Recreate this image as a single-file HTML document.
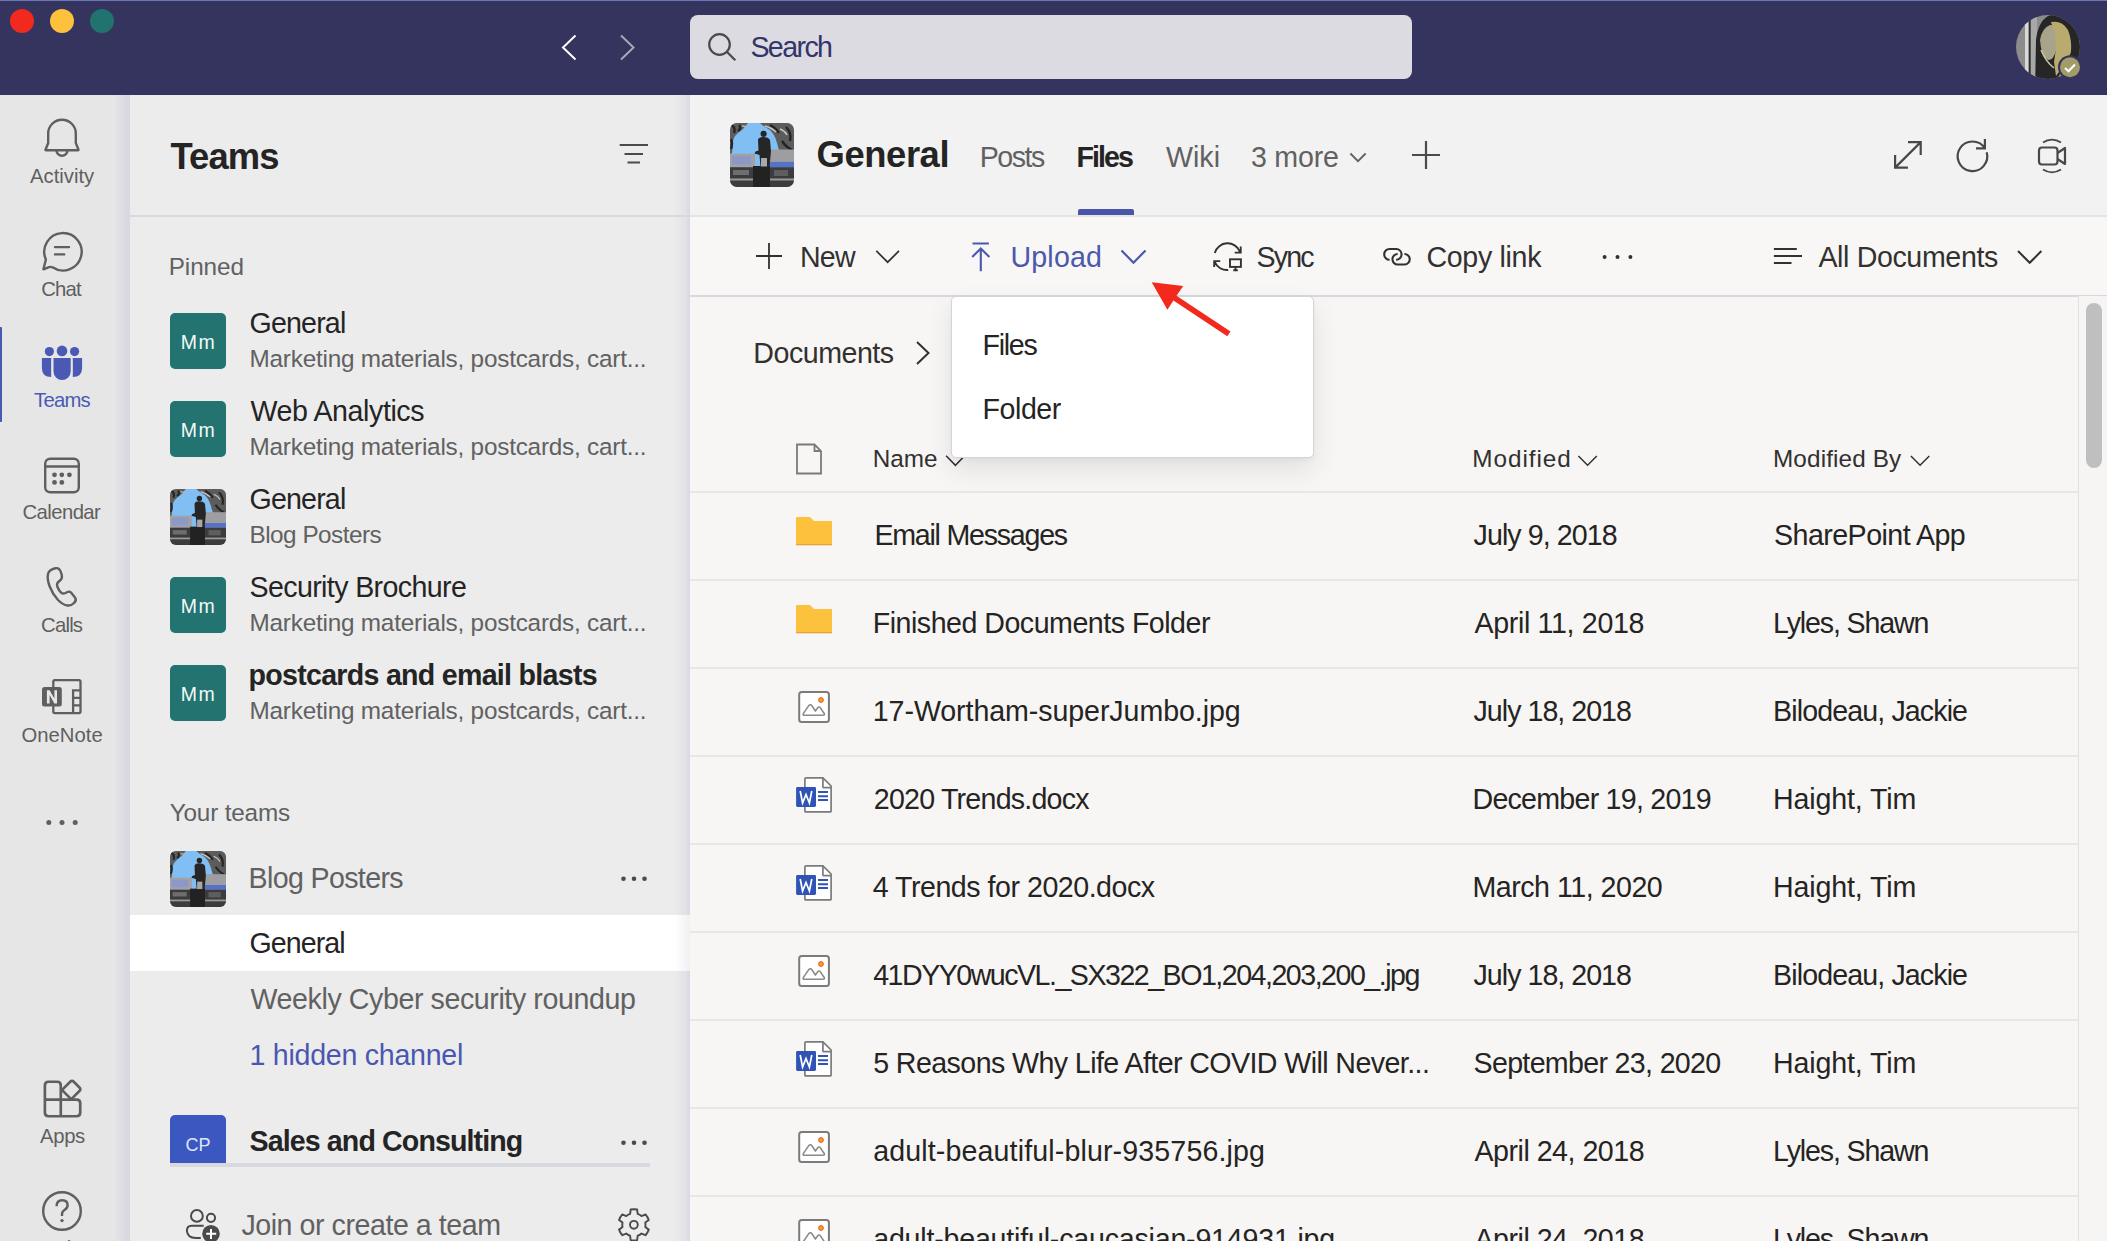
<!DOCTYPE html>
<html><head><meta charset="utf-8"><title>Teams</title>
<style>
html,body{margin:0;padding:0;}
body{width:2107px;height:1241px;overflow:hidden;position:relative;background:#f7f6f4;font-family:"Liberation Sans",sans-serif;}
.t{position:absolute;white-space:nowrap;line-height:1;}
.r{position:absolute;display:block;}
</style></head><body>
<div class="r" style="left:0px;top:0px;width:2107px;height:95px;background:#34345e;"></div>
<div class="r" style="left:0px;top:0px;width:2107px;height:1px;background:#6e78b8;"></div>
<div class="r" style="left:0px;top:95px;width:130px;height:1146px;background:#e6e6e6;"></div>
<div class="r" style="left:114px;top:95px;width:12px;height:1146px;background:linear-gradient(90deg,rgba(216,215,226,0),rgba(216,215,226,0.85))"></div>
<div class="r" style="left:126px;top:95px;width:4px;height:1146px;background:#d9d8e1;"></div>
<div class="r" style="left:130px;top:95px;width:560px;height:1146px;background:#ececec;"></div>
<div class="r" style="left:674px;top:95px;width:13px;height:1146px;background:linear-gradient(90deg,rgba(216,215,226,0),rgba(216,215,226,0.55))"></div>
<div class="r" style="left:687px;top:95px;width:3px;height:1146px;background:#dcdbe3;"></div>
<div class="r" style="left:690px;top:95px;width:1417px;height:121px;background:#f2f2f2;"></div>
<div class="r" style="left:690px;top:217px;width:1417px;height:78px;background:#f8f7f6;"></div>
<div class="r" style="left:690px;top:296px;width:1417px;height:945px;background:#f7f6f4;"></div>
<div class="r" style="left:130px;top:215px;width:560px;height:2px;background:#d8d8e0;"></div>
<div class="r" style="left:690px;top:215px;width:1417px;height:2px;background:#e4e4e4;"></div>
<div class="r" style="left:690px;top:295px;width:1417px;height:2px;background:#d9d8de;"></div>
<svg class="r" style="left:0px;top:0px;" width="130" height="45" viewBox="0 0 130 45"><circle cx="22" cy="21" r="12" fill="#f2291e"/><circle cx="62" cy="21" r="12" fill="#fdc13e"/><circle cx="102" cy="21" r="12" fill="#217370"/></svg>
<svg class="r" style="left:550px;top:25px;" width="100" height="45" viewBox="0 0 100 45"><path d="M25.5 10.5 L13 22.5 L25.5 34.5" fill="none" stroke="#ffffff" stroke-width="2"/><path d="M71 10.5 L83.5 22.5 L71 34.5" fill="none" stroke="#a8a8b4" stroke-width="2"/></svg>
<div class="r" style="left:690px;top:15px;width:722px;height:64px;background:#dcdbe1;border-radius:8px;"></div>
<svg class="r" style="left:700px;top:25px;" width="50" height="45" viewBox="0 0 50 45"><circle cx="19.5" cy="19.5" r="10.3" fill="none" stroke="#4a4a4a" stroke-width="2.2"/><path d="M26.8 26.8 L35.3 35.3" stroke="#4a4a4a" stroke-width="2.2" stroke-linecap="butt"/></svg>
<div class="t" style="left:750.40px;top:33.0px;font-size:28.6px;color:#33356a;letter-spacing:-1.60px;">Search</div>
<svg class="r" style="left:2010px;top:10px" width="80" height="80" viewBox="0 0 80 80">
<defs><clipPath id="av"><circle cx="38" cy="37" r="32"/></clipPath></defs>
<g clip-path="url(#av)">
<rect x="0" y="0" width="80" height="80" fill="#8c8c8c"/>
<rect x="15" y="0" width="3.2" height="80" fill="#d8d8d8"/>
<rect x="19" y="0" width="1.8" height="80" fill="#2c2c2c"/>
<rect x="20.8" y="0" width="6.2" height="80" fill="#a8a8a8"/>
<path d="M25 80 L26 30 Q28 12 38 6 Q48 2 58 8 Q68 16 70 34 L70 50 L62 56 L50 64 L40 80 Z" fill="#262626"/>
<path d="M30 30 Q32 18 40 15 Q46 14 47 22 L46 40 Q44 50 38 50 Q31 46 30 30 Z" fill="#a8a48a"/>
<path d="M41 12 Q52 10 58 20 Q62 30 61 42 L56 54 Q50 60 46 66 L44 52 Q47 36 45 24 Z" fill="#b9aa6e"/>
<path d="M31 40 Q36 52 44 58" stroke="#d0c8a0" stroke-width="1.5" fill="none"/>
</g>
<circle cx="60" cy="57.3" r="12" fill="#34345e"/>
<circle cx="60" cy="57.3" r="10" fill="#a39b68"/>
<path d="M55 58 L58.5 61.3 L65 54.5" fill="none" stroke="#fff" stroke-width="2"/>
</svg>
<div class="r" style="left:0px;top:327px;width:2px;height:95px;background:#4a5ab4;border-radius:0 1px 1px 0;"></div>
<svg class="r" style="left:32px;top:110px;" width="60" height="60" viewBox="0 0 60 60"><path d="M16.2 33 L16.2 23.5 A13.8 13.8 0 0 1 43.8 23.5 L43.8 33 L46.3 39.2 Q47 40.3 45.8 40.3 L14.2 40.3 Q13 40.3 13.7 39.2 Z" fill="none" stroke="#5f5f5f" stroke-width="2.4" stroke-linejoin="round"/><path d="M24.5 40.3 A5.5 5.5 0 0 0 35.5 40.3" fill="none" stroke="#5f5f5f" stroke-width="2.4"/></svg>
<div class="t" style="left:30.00px;top:166.0px;font-size:20.3px;color:#5f5f5f;">Activity</div>
<svg class="r" style="left:32px;top:222px;" width="60" height="60" viewBox="0 0 60 60"><path d="M13.6 36.8 A18.7 18.7 0 1 1 20.5 45.3 Q18.8 44.6 17 45.1 L11.4 47.3 L13.6 38.8 Q14 37.8 13.6 36.8 Z" fill="none" stroke="#5f5f5f" stroke-width="2.4" stroke-linejoin="round"/><path d="M23 25.1 H37 M23 32.4 H32.2" stroke="#5f5f5f" stroke-width="2.4" stroke-linecap="round"/></svg>
<div class="t" style="left:41.15px;top:278.5px;font-size:20.3px;color:#5f5f5f;letter-spacing:-0.77px;">Chat</div>
<svg class="r" style="left:32px;top:332px;" width="60" height="60" viewBox="0 0 60 60"><circle cx="17.4" cy="19.6" r="4.6" fill="#4a5ab4"/><circle cx="30" cy="18.9" r="5.3" fill="#4a5ab4"/><circle cx="42.6" cy="19.6" r="4.6" fill="#4a5ab4"/><path d="M21.5 26 H38.7 V39.3 A8.6 8.6 0 0 1 21.5 39.3 Z" fill="#4a5ab4"/><path d="M9.9 26 H19.3 Q19 29 19.2 45 Q9.9 45 9.9 36 Z" fill="#4a5ab4"/><path d="M50.1 26 H40.7 Q41 29 40.8 45 Q50.1 45 50.1 36 Z" fill="#4a5ab4"/></svg>
<div class="t" style="left:34.10px;top:390.0px;font-size:20.3px;color:#4a5ab4;letter-spacing:-0.80px;">Teams</div>
<svg class="r" style="left:40px;top:453px;" width="45" height="45" viewBox="0 0 45 45"><rect x="5.2" y="5.7" width="33.6" height="33.6" rx="5" fill="none" stroke="#5f5f5f" stroke-width="2.4"/><path d="M5.2 13.5 H38.8" stroke="#5f5f5f" stroke-width="2.4"/><circle cx="14.5" cy="21.8" r="2.4" fill="#5f5f5f"/><circle cx="21.8" cy="21.8" r="2.4" fill="#5f5f5f"/><circle cx="29.4" cy="21.8" r="2.4" fill="#5f5f5f"/><circle cx="14.5" cy="29.4" r="2.4" fill="#5f5f5f"/><circle cx="21.8" cy="29.4" r="2.4" fill="#5f5f5f"/></svg>
<div class="t" style="left:22.50px;top:502.4px;font-size:20.3px;color:#5f5f5f;letter-spacing:-0.57px;">Calendar</div>
<svg class="r" style="left:36px;top:560px;" width="50" height="52" viewBox="0 0 50 52"><path d="M12 14 Q13 9.5 19.5 8.2 Q23.5 7.5 25 12.5 L25.8 15.2 Q26.5 18.5 24 20.5 L21.8 22.5 Q20.5 24 21.5 27 Q23 31 25.5 33 Q27 34 29.5 33 L31.5 32 Q33.5 31 35 32.5 L39 37.5 Q41 40.5 38 43 Q35 46 31.5 45.5 Q27 45 22 40 Q16.5 34 13.5 26 Q11 19 12 14 Z" fill="none" stroke="#5f5f5f" stroke-width="2.4" stroke-linejoin="round"/></svg>
<div class="t" style="left:41.10px;top:614.7px;font-size:20.3px;color:#5f5f5f;letter-spacing:-0.80px;">Calls</div>
<svg class="r" style="left:40px;top:675px;" width="45" height="45" viewBox="0 0 45 45"><rect x="13.3" y="5.2" width="27.2" height="32.9" rx="1.5" fill="none" stroke="#5f5f5f" stroke-width="2.3"/><path d="M33.1 38.1 V15.3 H40.5 M33.1 22.8 H40.5 M33.1 30.4 H40.5" fill="none" stroke="#5f5f5f" stroke-width="2.3"/><rect x="2" y="12.1" width="19.8" height="19.5" rx="2.5" fill="#5f5f5f"/><path d="M6.9 28.4 V15.3 H9.6 L14.4 23.6 V15.3 H17 V28.4 H14.4 L9.6 20.1 V28.4 Z" fill="#e8e8e8"/></svg>
<div class="t" style="left:21.50px;top:725.0px;font-size:20.3px;color:#5f5f5f;">OneNote</div>
<svg class="r" style="left:40px;top:812px;" width="45" height="20" viewBox="0 0 45 20"><circle cx="8.8" cy="10.6" r="2.5" fill="#5f5f5f"/><circle cx="22" cy="10.6" r="2.5" fill="#5f5f5f"/><circle cx="35.2" cy="10.6" r="2.5" fill="#5f5f5f"/></svg>
<svg class="r" style="left:38.45px;top:1073.7px" width="50" height="50" viewBox="0 0 45 45"><path d="M6.2 22.4 V10.3 Q6.2 7 9.5 7 H17.3 Q20.5 7 20.5 10.3 V38 H9.5 Q6.2 38 6.2 34.7 Z M6.2 23 H34.7 Q38 23 38 26.3 V34.7 Q38 38 34.7 38 H20.5" fill="none" stroke="#5f5f5f" stroke-width="2.4" stroke-linejoin="round"/><path d="M22.8 13.2 L29 7 Q30.6 5.4 32.2 7 L37.3 12.1 Q38.9 13.7 37.3 15.3 L31.1 21.5 Q29.9 22.7 28.7 21.5 L22.8 15.6 Q21.6 14.4 22.8 13.2 Z" fill="none" stroke="#5f5f5f" stroke-width="2.4" stroke-linejoin="round"/></svg>
<div class="t" style="left:40.00px;top:1126.0px;font-size:20.3px;color:#5f5f5f;letter-spacing:-0.33px;">Apps</div>
<svg class="r" style="left:40px;top:1189px;" width="45" height="45" viewBox="0 0 45 45"><circle cx="22" cy="22" r="18.8" fill="none" stroke="#5f5f5f" stroke-width="2.4"/><path d="M16.6 17.2 Q16.6 11.3 22.3 11.3 Q27.6 11.3 27.6 16.3 Q27.6 19.4 24.2 21.2 Q22 22.5 22 25.6 V27" fill="none" stroke="#5f5f5f" stroke-width="2.4"/><circle cx="22" cy="31.6" r="1.7" fill="#5f5f5f"/></svg>
<div class="t" style="left:39.50px;top:1238.0px;font-size:20.3px;color:#5f5f5f;letter-spacing:0.67px;">Help</div>
<div class="t" style="left:170.40px;top:139.0px;font-size:36.4px;color:#252424;font-weight:700;letter-spacing:-0.85px;">Teams</div>
<svg class="r" style="left:615px;top:140px;" width="40" height="30" viewBox="0 0 40 30"><path d="M4.7 5 H33 M9.5 14 H28 M12.5 22.5 H25" stroke="#4a4a4a" stroke-width="2"/></svg>
<div class="t" style="left:168.70px;top:255.0px;font-size:24.3px;color:#616161;letter-spacing:-0.08px;">Pinned</div>
<div class="r" style="left:170px;top:313px;width:56px;height:56px;background:#237470;border-radius:5px;"></div>
<div class="t" style="left:180.80px;top:333.0px;font-size:19.5px;color:#f4f8f8;letter-spacing:1.40px;">Mm</div>
<div class="t" style="left:249.50px;top:309.2px;font-size:28.6px;color:#252424;letter-spacing:-0.83px;">General</div>
<div class="t" style="left:249.50px;top:347.0px;font-size:24.3px;color:#616161;letter-spacing:-0.21px;">Marketing materials, postcards, cart...</div>
<div class="r" style="left:170px;top:401px;width:56px;height:56px;background:#237470;border-radius:5px;"></div>
<div class="t" style="left:180.80px;top:421.0px;font-size:19.5px;color:#f4f8f8;letter-spacing:1.40px;">Mm</div>
<div class="t" style="left:250.50px;top:397.2px;font-size:28.6px;color:#252424;letter-spacing:-0.42px;">Web Analytics</div>
<div class="t" style="left:249.50px;top:435.0px;font-size:24.3px;color:#616161;letter-spacing:-0.21px;">Marketing materials, postcards, cart...</div>
<svg class="r" style="left:170px;top:489px" width="56" height="56" viewBox="0 0 64 64"><defs><clipPath id="ph170489"><rect width="64" height="64" rx="6.9"/></clipPath></defs><g clip-path="url(#ph170489)">
<rect width="64" height="64" fill="#80bef4"/>
<path d="M0 0 H18 Q14 6 8 10 Q4 13 3 18 L2 30 L0 32 Z" fill="#5e5e5e"/>
<path d="M1 2 Q6 4 4 10 M9 2 Q12 5 8 8 M1 16 Q3 20 1 26" stroke="#262626" stroke-width="2.4" fill="none"/>
<path d="M12 3 Q16 3 18 5" stroke="#b4b4b4" stroke-width="1.6" fill="none"/>
<path d="M30 0 H64 V30 H51 Q48 26 47 20 Q45 12 40 7 Q34 4 30 0 Z" fill="#5c5c5c"/>
<path d="M40 2 Q46 5 49 10 M56 4 Q62 10 60 18 M52 18 Q56 24 62 27" stroke="#242424" stroke-width="2.4" fill="none"/>
<path d="M35 3 Q42 5 46 9 M50 6 Q55 8 57 12" stroke="#c8c8c8" stroke-width="1.5" fill="none"/>
<rect x="0" y="30.6" width="25" height="14" fill="#a2a2a6"/>
<rect x="2" y="33" width="19" height="8.5" fill="#8c98c6"/>
<rect x="39" y="26.5" width="25" height="18" fill="#9e9ea2"/>
<rect x="39" y="38.9" width="25" height="5.3" fill="#5572c8"/>
<rect x="0" y="44.2" width="64" height="19.8" fill="#3c3c3e"/>
<rect x="0" y="55.5" width="64" height="2" fill="#9a9a9a"/>
<rect x="3" y="47" width="16" height="5" fill="#6e6e6e"/>
<rect x="44" y="47" width="14" height="6" fill="#5e5e5e"/>
<path d="M28 16.5 Q29 14 33 14 Q38.5 14 40 17 L41 28 L39.5 44 H30.5 L29.5 32 L24.5 30.5 L25.5 28.5 L28.5 27.5 Z" fill="#262626"/>
<circle cx="33.6" cy="10.8" r="3.1" fill="#262626"/>
<rect x="23" y="43" width="17" height="21" fill="#222"/>
<rect x="31" y="35" width="6" height="8.5" fill="#a8a8a8"/>
</g></svg>
<div class="t" style="left:249.50px;top:485.2px;font-size:28.6px;color:#252424;letter-spacing:-0.83px;">General</div>
<div class="t" style="left:249.50px;top:523.0px;font-size:24.3px;color:#616161;letter-spacing:-0.50px;">Blog Posters</div>
<div class="r" style="left:170px;top:577px;width:56px;height:56px;background:#237470;border-radius:5px;"></div>
<div class="t" style="left:180.80px;top:597.0px;font-size:19.5px;color:#f4f8f8;letter-spacing:1.40px;">Mm</div>
<div class="t" style="left:249.50px;top:573.2px;font-size:28.6px;color:#252424;letter-spacing:-0.62px;">Security Brochure</div>
<div class="t" style="left:249.50px;top:611.0px;font-size:24.3px;color:#616161;letter-spacing:-0.21px;">Marketing materials, postcards, cart...</div>
<div class="r" style="left:170px;top:665px;width:56px;height:56px;background:#237470;border-radius:5px;"></div>
<div class="t" style="left:180.80px;top:685.0px;font-size:19.5px;color:#f4f8f8;letter-spacing:1.40px;">Mm</div>
<div class="t" style="left:248.50px;top:661.2px;font-size:28.6px;color:#252424;font-weight:700;letter-spacing:-0.72px;">postcards and email blasts</div>
<div class="t" style="left:249.50px;top:699.0px;font-size:24.3px;color:#616161;letter-spacing:-0.21px;">Marketing materials, postcards, cart...</div>
<div class="t" style="left:169.70px;top:800.5px;font-size:24.3px;color:#616161;letter-spacing:-0.17px;">Your teams</div>
<svg class="r" style="left:170px;top:851px" width="56" height="56" viewBox="0 0 64 64"><defs><clipPath id="ph170851"><rect width="64" height="64" rx="6.9"/></clipPath></defs><g clip-path="url(#ph170851)">
<rect width="64" height="64" fill="#80bef4"/>
<path d="M0 0 H18 Q14 6 8 10 Q4 13 3 18 L2 30 L0 32 Z" fill="#5e5e5e"/>
<path d="M1 2 Q6 4 4 10 M9 2 Q12 5 8 8 M1 16 Q3 20 1 26" stroke="#262626" stroke-width="2.4" fill="none"/>
<path d="M12 3 Q16 3 18 5" stroke="#b4b4b4" stroke-width="1.6" fill="none"/>
<path d="M30 0 H64 V30 H51 Q48 26 47 20 Q45 12 40 7 Q34 4 30 0 Z" fill="#5c5c5c"/>
<path d="M40 2 Q46 5 49 10 M56 4 Q62 10 60 18 M52 18 Q56 24 62 27" stroke="#242424" stroke-width="2.4" fill="none"/>
<path d="M35 3 Q42 5 46 9 M50 6 Q55 8 57 12" stroke="#c8c8c8" stroke-width="1.5" fill="none"/>
<rect x="0" y="30.6" width="25" height="14" fill="#a2a2a6"/>
<rect x="2" y="33" width="19" height="8.5" fill="#8c98c6"/>
<rect x="39" y="26.5" width="25" height="18" fill="#9e9ea2"/>
<rect x="39" y="38.9" width="25" height="5.3" fill="#5572c8"/>
<rect x="0" y="44.2" width="64" height="19.8" fill="#3c3c3e"/>
<rect x="0" y="55.5" width="64" height="2" fill="#9a9a9a"/>
<rect x="3" y="47" width="16" height="5" fill="#6e6e6e"/>
<rect x="44" y="47" width="14" height="6" fill="#5e5e5e"/>
<path d="M28 16.5 Q29 14 33 14 Q38.5 14 40 17 L41 28 L39.5 44 H30.5 L29.5 32 L24.5 30.5 L25.5 28.5 L28.5 27.5 Z" fill="#262626"/>
<circle cx="33.6" cy="10.8" r="3.1" fill="#262626"/>
<rect x="23" y="43" width="17" height="21" fill="#222"/>
<rect x="31" y="35" width="6" height="8.5" fill="#a8a8a8"/>
</g></svg>
<div class="t" style="left:248.50px;top:863.8px;font-size:28.6px;color:#616161;letter-spacing:-0.64px;">Blog Posters</div>
<svg class="r" style="left:615px;top:868px;" width="40" height="22" viewBox="0 0 40 22"><circle cx="8.5" cy="10.8" r="2.3" fill="#4a4a4a"/><circle cx="19" cy="10.8" r="2.3" fill="#4a4a4a"/><circle cx="29.5" cy="10.8" r="2.3" fill="#4a4a4a"/></svg>
<div class="r" style="left:130px;top:915px;width:560px;height:56px;background:linear-gradient(90deg,#fff 0,#fff 545px,#f0f0f3 560px)"></div>
<div class="t" style="left:249.50px;top:929.0px;font-size:28.6px;color:#252424;letter-spacing:-0.93px;">General</div>
<div class="t" style="left:250.50px;top:985.0px;font-size:28.6px;color:#616161;letter-spacing:-0.41px;">Weekly Cyber security roundup</div>
<div class="t" style="left:249.50px;top:1040.6px;font-size:28.6px;color:#4a57b0;letter-spacing:-0.27px;">1 hidden channel</div>
<div class="r" style="left:170px;top:1115px;width:56px;height:48px;background:#3b57c0;border-radius:5px 5px 0 0;"></div>
<div class="t" style="left:185.50px;top:1136.1px;font-size:18px;color:#dfe6fa;">CP</div>
<div class="t" style="left:249.50px;top:1126.8px;font-size:28.6px;color:#252424;font-weight:700;letter-spacing:-0.89px;">Sales and Consulting</div>
<svg class="r" style="left:615px;top:1132px;" width="40" height="22" viewBox="0 0 40 22"><circle cx="8.5" cy="10.8" r="2.3" fill="#4a4a4a"/><circle cx="19" cy="10.8" r="2.3" fill="#4a4a4a"/><circle cx="29.5" cy="10.8" r="2.3" fill="#4a4a4a"/></svg>
<div class="r" style="left:170px;top:1163px;width:480px;height:4px;background:#d8d8e0;"></div>
<svg class="r" style="left:180px;top:1200px;" width="50" height="41" viewBox="0 0 50 41"><circle cx="16.9" cy="15.9" r="5.9" fill="none" stroke="#4a4a4a" stroke-width="2"/><circle cx="31" cy="17.8" r="4.1" fill="none" stroke="#4a4a4a" stroke-width="2"/><path d="M23.7 25.8 H11.5 Q6.9 25.8 6.9 30.8 Q7.3 38 16 38 H20.8" fill="none" stroke="#4a4a4a" stroke-width="2"/><circle cx="31" cy="33.7" r="9.8" fill="#ececec"/><circle cx="31" cy="33.7" r="8.8" fill="#4a4a4a"/><path d="M31 28.9 V39.1 M26.2 33.7 H36.2" stroke="#fff" stroke-width="2"/></svg>
<div class="t" style="left:241.40px;top:1210.8px;font-size:28.6px;color:#616161;letter-spacing:-0.45px;">Join or create a team</div>
<svg class="r" style="left:605px;top:1195px;" width="60" height="46" viewBox="0 0 60 46"><path d="M25.12 18.83 L25.66 14.54 A15.6 15.6 0 0 1 32.14 14.54 L32.68 18.83 A11.6 11.6 0 0 1 36.51 21.05 L40.49 19.36 A15.6 15.6 0 0 1 43.74 24.98 L40.29 27.59 A11.6 11.6 0 0 1 40.29 32.01 L43.74 34.62 A15.6 15.6 0 0 1 40.49 40.24 L36.51 38.55 A11.6 11.6 0 0 1 32.68 40.77 L32.14 45.06 A15.6 15.6 0 0 1 25.66 45.06 L25.12 40.77 A11.6 11.6 0 0 1 21.29 38.55 L17.31 40.24 A15.6 15.6 0 0 1 14.06 34.62 L17.51 32.01 A11.6 11.6 0 0 1 17.51 27.59 L14.06 24.98 A15.6 15.6 0 0 1 17.31 19.36 L21.29 21.05 A11.6 11.6 0 0 1 25.12 18.83 Z" fill="none" stroke="#4a4a4a" stroke-width="1.9" stroke-linejoin="round"/><circle cx="28.9" cy="29.8" r="3.9" fill="none" stroke="#4a4a4a" stroke-width="1.9"/></svg>
<svg class="r" style="left:730px;top:123px" width="64" height="64" viewBox="0 0 64 64"><defs><clipPath id="ph730123"><rect width="64" height="64" rx="7.0"/></clipPath></defs><g clip-path="url(#ph730123)">
<rect width="64" height="64" fill="#80bef4"/>
<path d="M0 0 H18 Q14 6 8 10 Q4 13 3 18 L2 30 L0 32 Z" fill="#5e5e5e"/>
<path d="M1 2 Q6 4 4 10 M9 2 Q12 5 8 8 M1 16 Q3 20 1 26" stroke="#262626" stroke-width="2.4" fill="none"/>
<path d="M12 3 Q16 3 18 5" stroke="#b4b4b4" stroke-width="1.6" fill="none"/>
<path d="M30 0 H64 V30 H51 Q48 26 47 20 Q45 12 40 7 Q34 4 30 0 Z" fill="#5c5c5c"/>
<path d="M40 2 Q46 5 49 10 M56 4 Q62 10 60 18 M52 18 Q56 24 62 27" stroke="#242424" stroke-width="2.4" fill="none"/>
<path d="M35 3 Q42 5 46 9 M50 6 Q55 8 57 12" stroke="#c8c8c8" stroke-width="1.5" fill="none"/>
<rect x="0" y="30.6" width="25" height="14" fill="#a2a2a6"/>
<rect x="2" y="33" width="19" height="8.5" fill="#8c98c6"/>
<rect x="39" y="26.5" width="25" height="18" fill="#9e9ea2"/>
<rect x="39" y="38.9" width="25" height="5.3" fill="#5572c8"/>
<rect x="0" y="44.2" width="64" height="19.8" fill="#3c3c3e"/>
<rect x="0" y="55.5" width="64" height="2" fill="#9a9a9a"/>
<rect x="3" y="47" width="16" height="5" fill="#6e6e6e"/>
<rect x="44" y="47" width="14" height="6" fill="#5e5e5e"/>
<path d="M28 16.5 Q29 14 33 14 Q38.5 14 40 17 L41 28 L39.5 44 H30.5 L29.5 32 L24.5 30.5 L25.5 28.5 L28.5 27.5 Z" fill="#262626"/>
<circle cx="33.6" cy="10.8" r="3.1" fill="#262626"/>
<rect x="23" y="43" width="17" height="21" fill="#222"/>
<rect x="31" y="35" width="6" height="8.5" fill="#a8a8a8"/>
</g></svg>
<div class="t" style="left:816.60px;top:137.4px;font-size:36.4px;color:#252424;font-weight:700;letter-spacing:-0.43px;">General</div>
<div class="t" style="left:979.80px;top:142.7px;font-size:28.6px;color:#616161;letter-spacing:-1.50px;">Posts</div>
<div class="t" style="left:1076.60px;top:142.7px;font-size:28.6px;color:#252424;font-weight:700;letter-spacing:-1.95px;">Files</div>
<div class="t" style="left:1166.00px;top:142.7px;font-size:28.6px;color:#616161;">Wiki</div>
<div class="t" style="left:1250.90px;top:142.7px;font-size:28.6px;color:#616161;letter-spacing:-0.20px;">3 more</div>
<svg class="r" style="left:1345px;top:148px;" width="26" height="20" viewBox="0 0 26 20"><path d="M5.4 5.5 L13 13.2 L20.6 5.5" fill="none" stroke="#616161" stroke-width="1.8"/></svg>
<svg class="r" style="left:1405px;top:135px;" width="42" height="42" viewBox="0 0 42 42"><path d="M21 6 V34 M7 20 H35" stroke="#4a4a4a" stroke-width="2.2"/></svg>
<div class="r" style="left:1078px;top:209px;width:56px;height:6px;background:#4b55a8;border-radius:2px 2px 0 0;"></div>
<svg class="r" style="left:1888px;top:135px;" width="40" height="40" viewBox="0 0 40 40"><path d="M7.1 32.6 L32.7 7.1 M20 7.1 H32.7 V19.9 M7.1 19.9 V32.6 H19.9" fill="none" stroke="#484848" stroke-width="2.2"/></svg>
<svg class="r" style="left:1950px;top:133px;" width="44" height="44" viewBox="0 0 44 44"><path d="M36.7 19.3 A14.8 14.8 0 1 1 34.9 15.3" fill="none" stroke="#484848" stroke-width="2.2"/><path d="M26 15.3 H34.9 V6" fill="none" stroke="#484848" stroke-width="2.2"/></svg>
<svg class="r" style="left:2032px;top:133.5px;" width="40" height="44" viewBox="0 0 40 44"><path d="M11 8.5 A16.5 16.5 0 0 1 29 8.5 M11 35.5 A16.5 16.5 0 0 0 29 35.5" fill="none" stroke="#484848" stroke-width="2"/><rect x="7" y="13.5" width="18.5" height="17" rx="3" fill="none" stroke="#484848" stroke-width="2.2"/><path d="M25.5 19 L33 14 V30 L25.5 25" fill="none" stroke="#484848" stroke-width="2.2" stroke-linejoin="round"/></svg>
<svg class="r" style="left:750px;top:238px;" width="38" height="38" viewBox="0 0 38 38"><path d="M19 5 V31 M6 18 H32" stroke="#323130" stroke-width="1.8"/></svg>
<div class="t" style="left:799.90px;top:242.8px;font-size:28.6px;color:#323130;letter-spacing:-0.75px;">New</div>
<svg class="r" style="left:870px;top:245px;" width="36" height="24" viewBox="0 0 36 24"><path d="M6.3 5.9 L17.65 17.2 L29 5.9" fill="none" stroke="#323130" stroke-width="1.7"/></svg>
<svg class="r" style="left:963px;top:238px;" width="36" height="38" viewBox="0 0 36 38"><path d="M9.5 5.5 H25.9 M17.8 33.3 V10 M9.2 19 L17.8 10.4 L26.4 19" fill="none" stroke="#4a58ad" stroke-width="2.1"/></svg>
<div class="t" style="left:1010.40px;top:242.8px;font-size:28.6px;color:#4a58ad;letter-spacing:0.20px;">Upload</div>
<svg class="r" style="left:1116px;top:245px;" width="36" height="24" viewBox="0 0 36 24"><path d="M5.5 5.5 L17.5 17.7 L29.5 5.5" fill="none" stroke="#4a58ad" stroke-width="2.2"/></svg>
<svg class="r" style="left:1205px;top:235px;" width="45" height="45" viewBox="0 0 45 45"><path d="M9.8 17.9 A13.2 13.2 0 0 1 34.8 16.7 M35.7 11.6 V17.6 H29.7 M23.2 35 A13.2 13.2 0 0 1 9.8 27.2 M15.2 26.1 H9.2 V31.9 M30.5 31.9 V35.2 M28.3 35.2 H32.8" fill="none" stroke="#323130" stroke-width="1.9"/><rect x="25" y="24.3" width="10.9" height="7.6" fill="none" stroke="#323130" stroke-width="1.9"/></svg>
<div class="t" style="left:1256.60px;top:242.8px;font-size:28.6px;color:#323130;letter-spacing:-1.87px;">Sync</div>
<svg class="r" style="left:1370px;top:235px;" width="50" height="45" viewBox="0 0 50 45"><path d="M19.6 24.7 A5.35 5.35 0 0 1 19.5 14 H26.3 A5.35 5.35 0 0 1 26.1 24.7" fill="none" stroke="#323130" stroke-width="2.1"/><path d="M27.7 19 A5.25 5.25 0 0 0 27.7 29.5 H34.6 A5.25 5.25 0 0 0 34.4 19" fill="none" stroke="#323130" stroke-width="2.1"/></svg>
<div class="t" style="left:1426.40px;top:242.8px;font-size:28.6px;color:#323130;letter-spacing:-0.32px;">Copy link</div>
<svg class="r" style="left:1598px;top:248px;" width="40" height="18" viewBox="0 0 40 18"><circle cx="6.6" cy="9" r="2" fill="#323130"/><circle cx="19.5" cy="9" r="2" fill="#323130"/><circle cx="32.4" cy="9" r="2" fill="#323130"/></svg>
<svg class="r" style="left:1765px;top:238px;" width="50" height="37" viewBox="0 0 50 37"><path d="M8.9 11 H31.8 M8.9 18 H37 M8.9 25 H26.5" stroke="#323130" stroke-width="2"/></svg>
<div class="t" style="left:1818.40px;top:242.8px;font-size:28.6px;color:#323130;letter-spacing:-0.37px;">All Documents</div>
<svg class="r" style="left:2012px;top:245px;" width="36" height="24" viewBox="0 0 36 24"><path d="M6 6 L17.7 17.8 L29.4 6" fill="none" stroke="#323130" stroke-width="2"/></svg>
<div class="t" style="left:753.30px;top:339.0px;font-size:28.6px;color:#323130;letter-spacing:-0.48px;">Documents</div>
<svg class="r" style="left:908px;top:335px;" width="30" height="36" viewBox="0 0 30 36"><path d="M9 7 L20.5 18 L9 29" fill="none" stroke="#323130" stroke-width="2"/></svg>
<svg class="r" style="left:790px;top:438px;" width="38" height="42" viewBox="0 0 38 42"><path d="M7 6.5 H24.5 L31 13 V35.5 H7 Z M24.5 6.5 V13 H31" fill="none" stroke="#7a7a7a" stroke-width="1.8" stroke-linejoin="miter"/></svg>
<div class="t" style="left:872.70px;top:447.0px;font-size:24.3px;color:#323130;">Name</div>
<svg class="r" style="left:940px;top:448px;" width="30" height="24" viewBox="0 0 30 24"><path d="M6.1 7.7 L15.4 17.3 L24.7 7.7" fill="none" stroke="#323130" stroke-width="1.5"/></svg>
<div class="t" style="left:1472.30px;top:447.0px;font-size:24.3px;color:#323130;letter-spacing:0.94px;">Modified</div>
<svg class="r" style="left:1572px;top:448px;" width="30" height="24" viewBox="0 0 30 24"><path d="M6.4 7.9 L15.6 17.3 L24.8 7.9" fill="none" stroke="#323130" stroke-width="1.5"/></svg>
<div class="t" style="left:1773.00px;top:447.0px;font-size:24.3px;color:#323130;letter-spacing:0.13px;">Modified By</div>
<svg class="r" style="left:1905px;top:448px;" width="30" height="24" viewBox="0 0 30 24"><path d="M5.9 7.9 L15.1 17.3 L24.3 7.9" fill="none" stroke="#323130" stroke-width="1.5"/></svg>
<div class="r" style="left:690px;top:491px;width:1389px;height:2px;background:#e8e7e6;"></div>
<div class="t" style="left:874.40px;top:521.0px;font-size:28.6px;color:#252423;letter-spacing:-1.23px;">Email Messages</div>
<div class="t" style="left:1473.50px;top:521.0px;font-size:28.6px;color:#252423;letter-spacing:-0.91px;">July 9, 2018</div>
<div class="t" style="left:1774.00px;top:521.0px;font-size:28.6px;color:#252423;letter-spacing:-0.54px;">SharePoint App</div>
<div class="r" style="left:690px;top:579px;width:1389px;height:2px;background:#e8e7e6;"></div>
<svg class="r" style="left:796px;top:517px;" width="40" height="32" viewBox="0 0 40 32"><path d="M0 1.2 Q0 0 1.2 0 H14 L18 4 H36 V28 H0 Z" fill="#fcc23d"/><rect x="0" y="27" width="36" height="1.3" fill="#e8a33a"/></svg>
<div class="t" style="left:872.80px;top:609.0px;font-size:28.6px;color:#252423;letter-spacing:-0.50px;">Finished Documents Folder</div>
<div class="t" style="left:1474.50px;top:609.0px;font-size:28.6px;color:#252423;letter-spacing:-0.34px;">April 11, 2018</div>
<div class="t" style="left:1773.00px;top:609.0px;font-size:28.6px;color:#252423;letter-spacing:-1.14px;">Lyles, Shawn</div>
<div class="r" style="left:690px;top:667px;width:1389px;height:2px;background:#e8e7e6;"></div>
<svg class="r" style="left:796px;top:605px;" width="40" height="32" viewBox="0 0 40 32"><path d="M0 1.2 Q0 0 1.2 0 H14 L18 4 H36 V28 H0 Z" fill="#fcc23d"/><rect x="0" y="27" width="36" height="1.3" fill="#e8a33a"/></svg>
<div class="t" style="left:872.80px;top:697.0px;font-size:28.6px;color:#252423;letter-spacing:-0.08px;">17-Wortham-superJumbo.jpg</div>
<div class="t" style="left:1473.50px;top:697.0px;font-size:28.6px;color:#252423;letter-spacing:-0.97px;">July 18, 2018</div>
<div class="t" style="left:1773.00px;top:697.0px;font-size:28.6px;color:#252423;letter-spacing:-0.88px;">Bilodeau, Jackie</div>
<div class="r" style="left:690px;top:755px;width:1389px;height:2px;background:#e8e7e6;"></div>
<svg class="r" style="left:790px;top:685.0px;" width="45" height="45" viewBox="0 0 45 45"><rect x="9.2" y="7" width="29.7" height="29.9" rx="2.5" fill="#fff" stroke="#7b7b7b" stroke-width="2"/><path d="M13.4 28.4 L18.6 20.9 Q20.3 18.6 22 20.9 L25.4 26 L27.4 23.1 Q29 20.9 30.6 23.1 L34 28.2 Q35.2 30.3 33.1 30.3 H14.6 Q12.4 30.3 13.4 28.4 Z" fill="none" stroke="#8a8a8a" stroke-width="1.6" stroke-linejoin="round"/><circle cx="31" cy="15" r="2.4" fill="#f7a21b" stroke="#e84a1c" stroke-width="0.9"/></svg>
<div class="t" style="left:873.80px;top:785.0px;font-size:28.6px;color:#252423;letter-spacing:-0.77px;">2020 Trends.docx</div>
<div class="t" style="left:1472.50px;top:785.0px;font-size:28.6px;color:#252423;letter-spacing:-0.75px;">December 19, 2019</div>
<div class="t" style="left:1773.00px;top:785.0px;font-size:28.6px;color:#252423;letter-spacing:-0.14px;">Haight, Tim</div>
<div class="r" style="left:690px;top:843px;width:1389px;height:2px;background:#e8e7e6;"></div>
<svg class="r" style="left:795px;top:770px;overflow:visible" width="40" height="40" viewBox="0 0 40 40"><path d="M9.9 8.8 Q9.9 7.8 10.9 7.8 H27.9 L36.1 16 V40.9 Q36.1 41.9 35.1 41.9 H10.9 Q9.9 41.9 9.9 40.9 Z" fill="#fff" stroke="#7b7b7b" stroke-width="1.7"/><path d="M27.9 7.8 V16.7 Q27.9 17.7 28.9 17.7 H36.1" fill="none" stroke="#7b7b7b" stroke-width="1.7"/><rect x="1.1" y="16.9" width="19.9" height="20" rx="1.3" fill="#2f54b5"/><path d="M5.2 21 L7.6 33 L11 24.5 L14.4 33 L16.8 21" fill="none" stroke="#fff" stroke-width="1.7" stroke-linejoin="miter"/><path d="M23 22 H33 M23 26.2 H33 M23 30 H33" stroke="#2f54b5" stroke-width="1.9"/></svg>
<div class="t" style="left:872.70px;top:873.0px;font-size:28.6px;color:#252423;letter-spacing:-0.48px;">4 Trends for 2020.docx</div>
<div class="t" style="left:1472.50px;top:873.0px;font-size:28.6px;color:#252423;letter-spacing:-0.49px;">March 11, 2020</div>
<div class="t" style="left:1773.00px;top:873.0px;font-size:28.6px;color:#252423;letter-spacing:-0.14px;">Haight, Tim</div>
<div class="r" style="left:690px;top:931px;width:1389px;height:2px;background:#e8e7e6;"></div>
<svg class="r" style="left:795px;top:858px;overflow:visible" width="40" height="40" viewBox="0 0 40 40"><path d="M9.9 8.8 Q9.9 7.8 10.9 7.8 H27.9 L36.1 16 V40.9 Q36.1 41.9 35.1 41.9 H10.9 Q9.9 41.9 9.9 40.9 Z" fill="#fff" stroke="#7b7b7b" stroke-width="1.7"/><path d="M27.9 7.8 V16.7 Q27.9 17.7 28.9 17.7 H36.1" fill="none" stroke="#7b7b7b" stroke-width="1.7"/><rect x="1.1" y="16.9" width="19.9" height="20" rx="1.3" fill="#2f54b5"/><path d="M5.2 21 L7.6 33 L11 24.5 L14.4 33 L16.8 21" fill="none" stroke="#fff" stroke-width="1.7" stroke-linejoin="miter"/><path d="M23 22 H33 M23 26.2 H33 M23 30 H33" stroke="#2f54b5" stroke-width="1.9"/></svg>
<div class="t" style="left:873.20px;top:961.0px;font-size:28.6px;color:#252423;letter-spacing:-1.50px;">41DYY0wucVL._SX322_BO1,204,203,200_.jpg</div>
<div class="t" style="left:1473.50px;top:961.0px;font-size:28.6px;color:#252423;letter-spacing:-0.97px;">July 18, 2018</div>
<div class="t" style="left:1773.00px;top:961.0px;font-size:28.6px;color:#252423;letter-spacing:-0.88px;">Bilodeau, Jackie</div>
<div class="r" style="left:690px;top:1019px;width:1389px;height:2px;background:#e8e7e6;"></div>
<svg class="r" style="left:790px;top:949.0px;" width="45" height="45" viewBox="0 0 45 45"><rect x="9.2" y="7" width="29.7" height="29.9" rx="2.5" fill="#fff" stroke="#7b7b7b" stroke-width="2"/><path d="M13.4 28.4 L18.6 20.9 Q20.3 18.6 22 20.9 L25.4 26 L27.4 23.1 Q29 20.9 30.6 23.1 L34 28.2 Q35.2 30.3 33.1 30.3 H14.6 Q12.4 30.3 13.4 28.4 Z" fill="none" stroke="#8a8a8a" stroke-width="1.6" stroke-linejoin="round"/><circle cx="31" cy="15" r="2.4" fill="#f7a21b" stroke="#e84a1c" stroke-width="0.9"/></svg>
<div class="t" style="left:873.20px;top:1049.0px;font-size:28.6px;color:#252423;letter-spacing:-0.58px;">5 Reasons Why Life After COVID Will Never...</div>
<div class="t" style="left:1473.50px;top:1049.0px;font-size:28.6px;color:#252423;letter-spacing:-0.67px;">September 23, 2020</div>
<div class="t" style="left:1773.00px;top:1049.0px;font-size:28.6px;color:#252423;letter-spacing:-0.14px;">Haight, Tim</div>
<div class="r" style="left:690px;top:1107px;width:1389px;height:2px;background:#e8e7e6;"></div>
<svg class="r" style="left:795px;top:1034px;overflow:visible" width="40" height="40" viewBox="0 0 40 40"><path d="M9.9 8.8 Q9.9 7.8 10.9 7.8 H27.9 L36.1 16 V40.9 Q36.1 41.9 35.1 41.9 H10.9 Q9.9 41.9 9.9 40.9 Z" fill="#fff" stroke="#7b7b7b" stroke-width="1.7"/><path d="M27.9 7.8 V16.7 Q27.9 17.7 28.9 17.7 H36.1" fill="none" stroke="#7b7b7b" stroke-width="1.7"/><rect x="1.1" y="16.9" width="19.9" height="20" rx="1.3" fill="#2f54b5"/><path d="M5.2 21 L7.6 33 L11 24.5 L14.4 33 L16.8 21" fill="none" stroke="#fff" stroke-width="1.7" stroke-linejoin="miter"/><path d="M23 22 H33 M23 26.2 H33 M23 30 H33" stroke="#2f54b5" stroke-width="1.9"/></svg>
<div class="t" style="left:873.20px;top:1137.0px;font-size:28.6px;color:#252423;letter-spacing:0.13px;">adult-beautiful-blur-935756.jpg</div>
<div class="t" style="left:1474.50px;top:1137.0px;font-size:28.6px;color:#252423;letter-spacing:-0.49px;">April 24, 2018</div>
<div class="t" style="left:1773.00px;top:1137.0px;font-size:28.6px;color:#252423;letter-spacing:-1.14px;">Lyles, Shawn</div>
<div class="r" style="left:690px;top:1195px;width:1389px;height:2px;background:#e8e7e6;"></div>
<svg class="r" style="left:790px;top:1125.0px;" width="45" height="45" viewBox="0 0 45 45"><rect x="9.2" y="7" width="29.7" height="29.9" rx="2.5" fill="#fff" stroke="#7b7b7b" stroke-width="2"/><path d="M13.4 28.4 L18.6 20.9 Q20.3 18.6 22 20.9 L25.4 26 L27.4 23.1 Q29 20.9 30.6 23.1 L34 28.2 Q35.2 30.3 33.1 30.3 H14.6 Q12.4 30.3 13.4 28.4 Z" fill="none" stroke="#8a8a8a" stroke-width="1.6" stroke-linejoin="round"/><circle cx="31" cy="15" r="2.4" fill="#f7a21b" stroke="#e84a1c" stroke-width="0.9"/></svg>
<div class="t" style="left:873.20px;top:1225.0px;font-size:28.6px;color:#252423;letter-spacing:-0.20px;">adult-beautiful-caucasian-914931.jpg</div>
<div class="t" style="left:1474.50px;top:1225.0px;font-size:28.6px;color:#252423;letter-spacing:-0.49px;">April 24, 2018</div>
<div class="t" style="left:1773.00px;top:1225.0px;font-size:28.6px;color:#252423;letter-spacing:-1.14px;">Lyles, Shawn</div>
<div class="r" style="left:690px;top:1283px;width:1389px;height:2px;background:#e8e7e6;"></div>
<svg class="r" style="left:790px;top:1213.0px;" width="45" height="45" viewBox="0 0 45 45"><rect x="9.2" y="7" width="29.7" height="29.9" rx="2.5" fill="#fff" stroke="#7b7b7b" stroke-width="2"/><path d="M13.4 28.4 L18.6 20.9 Q20.3 18.6 22 20.9 L25.4 26 L27.4 23.1 Q29 20.9 30.6 23.1 L34 28.2 Q35.2 30.3 33.1 30.3 H14.6 Q12.4 30.3 13.4 28.4 Z" fill="none" stroke="#8a8a8a" stroke-width="1.6" stroke-linejoin="round"/><circle cx="31" cy="15" r="2.4" fill="#f7a21b" stroke="#e84a1c" stroke-width="0.9"/></svg>
<div class="r" style="left:2079px;top:296px;width:28px;height:945px;background:#f6f5f4;"></div>
<div class="r" style="left:2078px;top:296px;width:1px;height:945px;background:#e2e1e0;"></div>
<div class="r" style="left:2086px;top:303px;width:16px;height:165px;background:#bfbfbf;border-radius:8px;"></div>
<div class="r" style="left:951px;top:296px;width:361px;height:160px;background:#fff;border:1px solid #d4d4dc;border-radius:5px;box-shadow:0 12px 28px rgba(0,0,0,0.09),0 2px 4px rgba(0,0,0,0.04);"></div>
<div class="t" style="left:982.60px;top:330.7px;font-size:28.6px;color:#252423;letter-spacing:-1.32px;">Files</div>
<div class="t" style="left:982.60px;top:395.0px;font-size:28.6px;color:#252423;letter-spacing:-0.48px;">Folder</div>
<svg class="r" style="left:1140px;top:270px;" width="100" height="75" viewBox="0 0 100 75"><path d="M11.7 12.2 L43.2 15.9 L36.5 25.8 L90.5 61.5 L87.3 66.2 L33.4 30.5 L27.4 39.8 Z" fill="#f22a1e"/></svg>
</body></html>
